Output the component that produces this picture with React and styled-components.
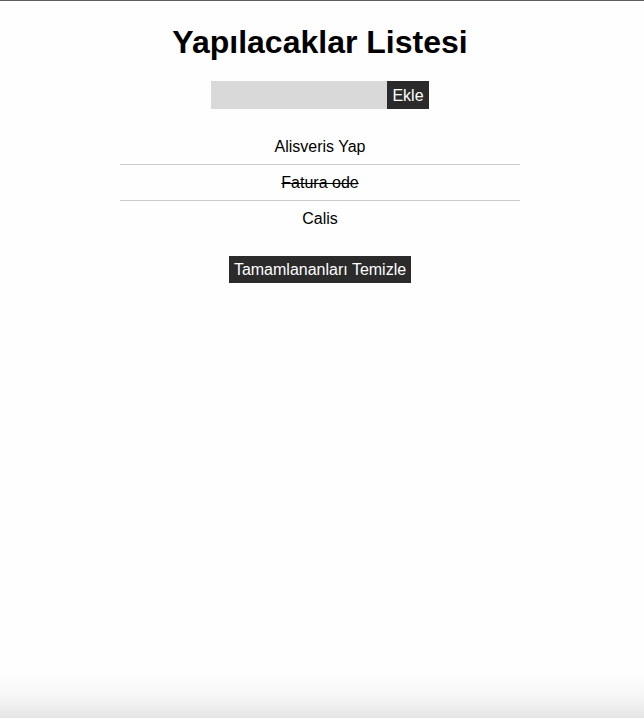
import React, { useState } from 'react';
import styled, { createGlobalStyle } from 'styled-components';

const GlobalStyle = createGlobalStyle`
  html, body {
    margin: 0;
    padding: 0;
  }
  body {
    font-family: "Liberation Sans", Arial, Helvetica, sans-serif;
    color: #000;
    border-top: 1px solid #5e5e5e;
    min-height: 718px;
    box-sizing: border-box;
    background: linear-gradient(to bottom, #fefefe 0, #fefefe 672px, #f6f6f6 696px, #e4e4e4 719px);
  }
`;

const Page = styled.div`
  display: flex;
  flex-direction: column;
  align-items: center;
  width: 640px;
  padding-top: 23px;
`;

const Title = styled.h1`
  margin: 0;
  font-size: 32px;
  line-height: 37px;
  font-weight: 700;
`;

const Form = styled.form`
  display: flex;
  margin-top: 20px;
`;

const Input = styled.input`
  width: 176px;
  height: 28px;
  box-sizing: border-box;
  border: none;
  outline: none;
  background: #d9d9d9;
  padding: 0 5px;
  font-family: inherit;
  font-size: 16px;
`;

const DarkButton = styled.button`
  border: none;
  background: #2b2b2b;
  color: #fff;
  font-family: inherit;
  font-size: 16px;
  line-height: 19px;
  padding: ${p => (p.small ? '5px 5px 4px' : '4px 5px')};
  margin: 0;
  cursor: pointer;
`;

const List = styled.ul`
  list-style: none;
  margin: 20px 0 0;
  padding: 0;
  width: 400px;
`;

const Item = styled.li`
  text-align: center;
  font-size: 16px;
  line-height: 19px;
  padding: 8px 0;
  border-bottom: ${p => (p.last ? 'none' : '1px solid #cccccc')};
  text-decoration: ${p => (p.done ? 'line-through' : 'none')};
  cursor: pointer;
`;

const Footer = styled.div`
  margin-top: 20px;
`;

export default function App() {
  const [todos, setTodos] = useState([
    { id: 1, text: 'Alisveris Yap', done: false },
    { id: 2, text: 'Fatura ode', done: true },
    { id: 3, text: 'Calis', done: false },
  ]);
  const [value, setValue] = useState('');

  const addTodo = (e) => {
    e.preventDefault();
    if (!value.trim()) return;
    setTodos([...todos, { id: Date.now(), text: value, done: false }]);
    setValue('');
  };

  const toggle = (id) =>
    setTodos(todos.map(t => (t.id === id ? { ...t, done: !t.done } : t)));

  return (
    <>
      <GlobalStyle />
      <Page>
        <Title>Yapılacaklar Listesi</Title>
        <Form onSubmit={addTodo}>
          <Input value={value} onChange={e => setValue(e.target.value)} />
          <DarkButton small type="submit">Ekle</DarkButton>
        </Form>
        <List>
          {todos.map((t, i) => (
            <Item
              key={t.id}
              done={t.done}
              last={i === todos.length - 1}
              onClick={() => toggle(t.id)}
            >
              {t.text}
            </Item>
          ))}
        </List>
        <Footer>
          <DarkButton onClick={() => setTodos(todos.filter(t => !t.done))}>
            Tamamlananları Temizle
          </DarkButton>
        </Footer>
      </Page>
    </>
  );
}
